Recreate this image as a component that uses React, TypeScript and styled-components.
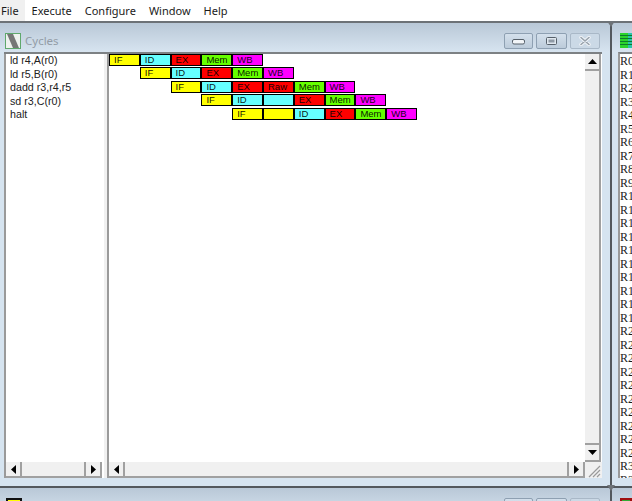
import React from 'react';
import styled, { createGlobalStyle } from 'styled-components';

const CELL_W = 30.8;

const STAGE_COLORS: Record<string, string> = {
  IF: '#ffff00',
  ID: '#66ffff',
  EX: '#ff0000',
  Mem: '#66ff00',
  WB: '#ff00ff',
};

type Stage = { label: string; kind: string };

const s = (kind: string, label: string = kind): Stage => ({ label, kind });

const instructions = ['ld r4,A(r0)', 'ld r5,B(r0)', 'dadd r3,r4,r5', 'sd r3,C(r0)', 'halt'];

const pipeline: { offset: number; stages: Stage[] }[] = [
  { offset: 0, stages: [s('IF'), s('ID'), s('EX'), s('Mem'), s('WB')] },
  { offset: 1, stages: [s('IF'), s('ID'), s('EX'), s('Mem'), s('WB')] },
  { offset: 2, stages: [s('IF'), s('ID'), s('EX'), s('EX', 'Raw'), s('Mem'), s('WB')] },
  { offset: 3, stages: [s('IF'), s('ID'), s('ID', ''), s('EX'), s('Mem'), s('WB')] },
  { offset: 4, stages: [s('IF'), s('IF', ''), s('ID'), s('EX'), s('Mem'), s('WB')] },
];

const registers = Array.from({ length: 32 }, (_, i) => `R${i}`);

const menus = ['File', 'Execute', 'Configure', 'Window', 'Help'];

function Arrow({ dir }: { dir: 'up' | 'down' | 'left' | 'right' }) {
  const points = {
    up: '0,5 9,5 4.5,0',
    down: '0,0 9,0 4.5,5',
    left: '5,0 5,9 0,4.5',
    right: '0,0 0,9 5,4.5',
  }[dir];
  const vertical = dir === 'up' || dir === 'down';
  return (
    <svg width={vertical ? 9 : 5} height={vertical ? 5 : 9}>
      <polygon points={points} fill="#000" />
    </svg>
  );
}

function CyclesIcon() {
  return (
    <svg width="16" height="16" viewBox="0 0 16 16">
      <rect x="0" y="0" width="16" height="16" fill="#eef2ee" />
      <polygon points="2,1 8,1 14,15 8,15" fill="#767676" />
      <rect x="0.5" y="0.5" width="15" height="15" fill="none" stroke="#5fa86c" />
    </svg>
  );
}

function RegistersIcon() {
  return (
    <RegIconWrap>
      <svg width="16" height="15" viewBox="0 0 16 15">
        <rect width="8" height="15" fill="#2bd42b" />
        <rect x="8" width="8" height="15" fill="#2cc4a8" />
        <path d="M0 2.5H16M0 5.5H16M0 8.5H16M0 11.5H16" stroke="#0b7a2e" />
      </svg>
    </RegIconWrap>
  );
}

function MinimizeIcon() {
  return (
    <svg width="13" height="6">
      <rect x="0.5" y="0.5" width="12" height="4.5" fill="#f2f5f8" stroke="#56606a" rx="1.5" />
    </svg>
  );
}

function MaximizeIcon() {
  return (
    <svg width="11" height="8">
      <rect x="0.5" y="0.5" width="10" height="7" fill="#dfe7ee" stroke="#56606a" rx="1" />
      <rect x="2.5" y="2.5" width="6" height="3" fill="#8f9aa5" />
    </svg>
  );
}

function CloseIcon() {
  return (
    <svg width="12" height="10">
      <path d="M2 1.5L10 8.5M10 1.5L2 8.5" stroke="#f2f5f8" strokeWidth="3.4" strokeLinecap="round" />
      <path d="M2 1.5L10 8.5M10 1.5L2 8.5" stroke="#98a2ac" strokeWidth="1.6" strokeLinecap="round" />
    </svg>
  );
}

function WindowButtons() {
  return (
    <Buttons>
      <CaptionButton $width={29} $align="flex-end">
        <MinimizeIcon />
      </CaptionButton>
      <CaptionButton $width={31}>
        <MaximizeIcon />
      </CaptionButton>
      <CaptionButton $width={30} $faded>
        <CloseIcon />
      </CaptionButton>
    </Buttons>
  );
}

function HScroll({ showGrip }: { showGrip?: boolean }) {
  return (
    <HBar>
      <ScrollBtn>
        <Arrow dir="left" />
      </ScrollBtn>
      <Track />
      <ScrollBtn>
        <Arrow dir="right" />
      </ScrollBtn>
      {showGrip && (
        <Grip>
          <svg width="16" height="16">
            <path d="M15 4L4 15M15 8L8 15M15 12L12 15" stroke="#9a9a9a" strokeWidth="1.2" />
          </svg>
        </Grip>
      )}
    </HBar>
  );
}

export default function App() {
  return (
    <Screen>
      <GlobalStyle />
      <MenuBar>
        {menus.map((m, i) => (
          <MenuItem key={m} $active={i === 0}>
            {m}
          </MenuItem>
        ))}
      </MenuBar>
      <Desktop>
        <Window>
          <TitleBar>
            <CyclesIcon />
            <TitleText>Cycles</TitleText>
            <WindowButtons />
          </TitleBar>
          <Client>
            <ListPane>
              <ListBody>
                {instructions.map((ins) => (
                  <ListRow key={ins}>{ins}</ListRow>
                ))}
              </ListBody>
              <HScroll />
            </ListPane>
            <ChartPane>
              <ChartMain>
                <ChartBody>
                  {pipeline.map((row, r) => (
                    <ChartRow key={r} $offset={row.offset}>
                      {row.stages.map((st, i) => (
                        <Cell key={i} $color={STAGE_COLORS[st.kind]}>
                          {st.label}
                        </Cell>
                      ))}
                    </ChartRow>
                  ))}
                </ChartBody>
                <VBar>
                  <ScrollBtn $tall>
                    <Arrow dir="up" />
                  </ScrollBtn>
                  <Track />
                  <ScrollBtn $tall>
                    <Arrow dir="down" />
                  </ScrollBtn>
                </VBar>
              </ChartMain>
              <HScroll showGrip />
            </ChartPane>
          </Client>
        </Window>
        <SideWindow>
          <TitleBar>
            <RegistersIcon />
          </TitleBar>
          <RegisterList>
            {registers.map((r) => (
              <RegisterRow key={r}>{r}</RegisterRow>
            ))}
          </RegisterList>
        </SideWindow>
        <BottomWindow>
          <TitleBar>
            <YellowIcon />
            <WindowButtons />
          </TitleBar>
        </BottomWindow>
        <BottomSide>
          <TitleBar>
            <RedIcon />
          </TitleBar>
        </BottomSide>
        <Notch $top={0} />
        <Notch $top={464} />
      </Desktop>
    </Screen>
  );
}

const GlobalStyle = createGlobalStyle`
  html, body {
    margin: 0;
    padding: 0;
    background: #d6e4f0;
  }
`;

const Screen = styled.div`
  width: 632px;
  height: 501px;
  overflow: hidden;
  display: flex;
  flex-direction: column;
  font-family: "Liberation Sans", Arial, sans-serif;
`;

const MenuBar = styled.div`
  height: 21px;
  flex: none;
  background: #fff;
  display: flex;
  gap: 13px;
  font-family: "Noto Sans", "Open Sans", sans-serif;
  font-size: 11px;
  color: #1a1a1a;
`;

const MenuItem = styled.div<{ $active?: boolean }>`
  line-height: 21px;
  ${(p) =>
    p.$active &&
    `
    background: #f0f0f0;
    padding: 0 6px 0 1px;
    margin-right: -6px;
  `}
`;

const Desktop = styled.div`
  flex: 1;
  position: relative;
  display: grid;
  grid-template-columns: 612px 1fr;
  grid-template-rows: 465px 1fr;
  min-height: 0;
`;

const Window = styled.div`
  display: flex;
  flex-direction: column;
  border-top: 2px solid #6d7277;
  border-right: 2px solid #53585d;
  min-height: 0;
  background: #d6e4f0;
`;

const SideWindow = styled.div`
  display: flex;
  flex-direction: column;
  border-top: 2px solid #6d7277;
  min-width: 0;
  min-height: 0;
  overflow: hidden;
  background: #d6e4f0;
`;

const BottomWindow = styled.div`
  border-top: 2px solid #53585d;
  border-right: 2px solid #53585d;
`;

const BottomSide = styled.div`
  border-top: 2px solid #53585d;
  overflow: hidden;
`;

const TitleBar = styled.div`
  height: 29px;
  flex: none;
  display: flex;
  align-items: flex-start;
  padding: 10px 0 0 5px;
  box-sizing: border-box;
  background: linear-gradient(to bottom, #b9c8d7, #d7e4f0);
`;

const TitleText = styled.span`
  margin-left: 4px;
  font-family: "Noto Sans", "Open Sans", sans-serif;
  font-size: 11.5px;
  line-height: 16px;
  color: #939ca6;
`;

const Buttons = styled.div`
  margin-left: auto;
  margin-right: 10px;
  display: flex;
  gap: 3px;
`;

const CaptionButton = styled.div<{ $width: number; $align?: string; $faded?: boolean }>`
  width: ${(p) => p.$width}px;
  height: 16px;
  display: flex;
  align-items: ${(p) => p.$align || 'center'};
  justify-content: center;
  padding-bottom: ${(p) => (p.$align ? '3px' : '0')};
  box-sizing: border-box;
  border: 1px solid ${(p) => (p.$faded ? '#a9b8c7' : '#8ea0b2')};
  border-radius: 2px;
  background: ${(p) => (p.$faded ? '#cbd9e6' : 'linear-gradient(to bottom, #d4e0ec, #bccbda)')};
`;

const RegIconWrap = styled.div`
  margin-left: 3px;
  height: 15px;
  line-height: 0;
`;

const Client = styled.div`
  flex: 1;
  display: flex;
  margin: 0 8px 8px 4px;
  min-height: 0;
  background: #f0f0f0;
  border-top: 2px solid #7d8184;
`;

const ListPane = styled.div`
  width: 100px;
  flex: none;
  display: flex;
  flex-direction: column;
  border-left: 2px solid #9a9a9a;
  border-right: 2px solid #fff;
  box-sizing: border-box;
  background: #fff;
`;

const ListBody = styled.div`
  flex: 1;
  padding: 0 0 0 4px;
`;

const ListRow = styled.div`
  height: 13.5px;
  line-height: 13.5px;
  font-size: 10.7px;
  color: #222;
  white-space: nowrap;
`;

const ChartPane = styled.div`
  flex: 1;
  min-width: 0;
  margin-left: 3px;
  display: flex;
  flex-direction: column;
  border-left: 2px solid #9a9a9a;
  background: #fff;
`;

const ChartMain = styled.div`
  flex: 1;
  display: flex;
  min-height: 0;
`;

const ChartBody = styled.div`
  flex: 1;
  min-width: 0;
`;

const ChartRow = styled.div<{ $offset: number }>`
  display: flex;
  height: 13.4px;
  margin-left: ${(p) => p.$offset * CELL_W}px;
`;

const Cell = styled.div<{ $color: string }>`
  width: ${CELL_W}px;
  height: 12px;
  box-sizing: border-box;
  border: 1px solid #000;
  padding-left: 4px;
  background: ${(p) => p.$color};
  font-size: 9.5px;
  line-height: 10px;
  color: rgba(0, 0, 0, 0.92);
`;

const VBar = styled.div`
  width: 16px;
  flex: none;
  display: flex;
  flex-direction: column;
  background: #f0f0f0;
  margin-right: 1px;
`;

const HBar = styled.div`
  height: 16px;
  flex: none;
  display: flex;
  background: #f0f0f0;
`;

const ScrollBtn = styled.div<{ $tall?: boolean }>`
  width: 16px;
  height: ${(p) => (p.$tall ? '17px' : '16px')};
  flex: none;
  display: flex;
  align-items: center;
  justify-content: center;
  box-sizing: border-box;
  background: #f0f0f0;
  border-right: 2px solid #a0a0a0;
  border-bottom: 2px solid #a0a0a0;
`;

const Track = styled.div`
  flex: 1;
  background: #f0f0f0;
  border-right: 2px solid #a0a0a0;
  border-bottom: 2px solid #a0a0a0;
`;

const Grip = styled.div`
  width: 17px;
  height: 16px;
  flex: none;
  background: #f0f0f0;
`;

const RegisterList = styled.div`
  flex: 1;
  margin: 0 0 8px 6px;
  padding: 1px 0 0 0;
  background: #fff;
  border-top: 2px solid #7d8184;
  border-left: 2px solid #9a9a9a;
  overflow: hidden;
`;

const RegisterRow = styled.div`
  height: 13.5px;
  line-height: 13.5px;
  font-family: "Liberation Serif", serif;
  font-size: 12px;
  color: #1c1c1c;
`;

const YellowIcon = styled.div`
  width: 16px;
  height: 16px;
  margin-left: 1px;
  box-sizing: border-box;
  background: #ffff00;
  border: 2px solid #111;
`;

const RedIcon = styled.div`
  width: 16px;
  height: 16px;
  box-sizing: border-box;
  background: #33aa33;
  border: 2px solid #a01010;
  margin-left: 3px;
`;

const Notch = styled.div<{ $top: number }>`
  position: absolute;
  left: 607px;
  top: ${(p) => p.$top}px;
  width: 0;
  height: 0;
  border-left: 4px solid transparent;
  border-right: 4px solid transparent;
  border-top: 6px solid #6d7277;
`;
